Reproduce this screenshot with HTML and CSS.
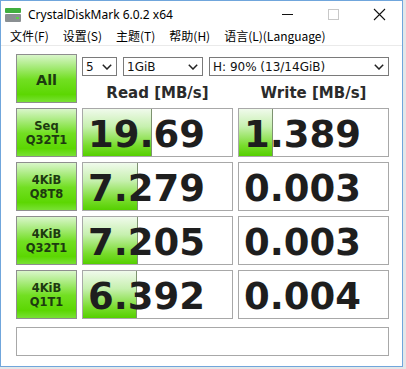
FILE: index.html
```html
<!DOCTYPE html>
<html lang="zh-CN">
  <head>
    <meta charset="UTF-8">
    <meta name="viewport" content="width=device-width, initial-scale=1.0">
    <title>CrystalDiskMark 6.0.2 x64</title>
    <link rel="stylesheet" href="styles.css">
  </head>
  <body>
    <div class="window">
      <div class="titlebar">
        <svg class="app-icon" width="16" height="14" viewBox="0 0 16 14">
          <rect x="0" y="0" width="16" height="5" rx="1" fill="#3fae3f"/>
          <rect x="0" y="6" width="16" height="8" rx="1" fill="#8a8f92"/>
          <rect x="11" y="9" width="3" height="2" fill="#5ad04a"/>
        </svg>
        <span class="title">CrystalDiskMark 6.0.2 x64</span>
        <div class="controls">
          <svg class="ctl" width="46" height="27" viewBox="0 0 46 27">
            <line x1="18" y1="13.5" x2="29" y2="13.5" stroke="#111" stroke-width="1"/>
          </svg>
          <svg class="ctl" width="46" height="27" viewBox="0 0 46 27">
            <rect x="18.5" y="8.5" width="10" height="10" fill="none" stroke="#c8c8c8" stroke-width="1"/>
          </svg>
          <svg class="ctl" width="46" height="27" viewBox="0 0 46 27">
            <path d="M18 8 L29 19 M29 8 L18 19" stroke="#111" stroke-width="1.1"/>
          </svg>
        </div>
      </div>
      <div class="menubar">
        <span class="menu-item">文件(F)</span>
        <span class="menu-item">设置(S)</span>
        <span class="menu-item">主题(T)</span>
        <span class="menu-item">帮助(H)</span>
        <span class="menu-item">语言(L)(Language)</span>
      </div>
      <div class="client">
        <div class="grid">
          <div class="test-btn all">All</div>
          <div class="top-controls">
            <div class="selects">
              <div class="select s-count">
                <span>5</span>
                <svg width="10" height="6" viewBox="0 0 10 6"><polyline points="0.8,0.8 5,5 9.2,0.8" fill="none" stroke="#222" stroke-width="1.5"/></svg>
              </div>
              <div class="select s-size">
                <span>1GiB</span>
                <svg width="10" height="6" viewBox="0 0 10 6"><polyline points="0.8,0.8 5,5 9.2,0.8" fill="none" stroke="#222" stroke-width="1.5"/></svg>
              </div>
              <div class="select s-drive">
                <span>H: 90% (13/14GiB)</span>
                <svg width="10" height="6" viewBox="0 0 10 6"><polyline points="0.8,0.8 5,5 9.2,0.8" fill="none" stroke="#222" stroke-width="1.5"/></svg>
              </div>
            </div>
            <div class="headers">
              <div class="col-head">Read [MB/s]</div>
              <div class="col-head">Write [MB/s]</div>
            </div>
          </div>

          <div class="test-btn">Seq<br>Q32T1</div>
          <div class="cell"><div class="bar" style="width: 46%"></div><span class="value">19.69</span></div>
          <div class="cell"><div class="bar" style="width: 23%"></div><span class="value">1.389</span></div>

          <div class="test-btn">4KiB<br>Q8T8</div>
          <div class="cell"><div class="bar" style="width: 37%"></div><span class="value">7.279</span></div>
          <div class="cell"><span class="value">0.003</span></div>

          <div class="test-btn">4KiB<br>Q32T1</div>
          <div class="cell"><div class="bar" style="width: 37%"></div><span class="value">7.205</span></div>
          <div class="cell"><span class="value">0.003</span></div>

          <div class="test-btn">4KiB<br>Q1T1</div>
          <div class="cell"><div class="bar" style="width: 36.5%"></div><span class="value">6.392</span></div>
          <div class="cell"><span class="value">0.004</span></div>
        </div>
        <div class="comment"></div>
      </div>
    </div>
  </body>
</html>
```

FILE: styles.css
```css
body {
  margin: 0;
  padding: 0;
  background-color: #e4e6e8;
}

.window {
  box-sizing: border-box;
  width: 403px;
  height: 367px;
  border: 1px solid #70a6dc;
  background-color: #fff;
  font-family: "Noto Sans", "Noto Sans CJK SC", sans-serif;
}

.titlebar {
  display: flex;
  align-items: center;
  height: 27px;
}

.app-icon {
  margin-left: 4px;
  margin-top: 1px;
}

.title {
  margin-left: 7px;
  font-size: 12px;
  color: #000;
}

.controls {
  display: flex;
  margin-left: auto;
}

.ctl {
  display: block;
}

.menubar {
  display: flex;
  align-items: center;
  height: 18px;
  padding-left: 9px;
  padding-bottom: 2px;
  box-sizing: border-box;
  gap: 14px;
  border-bottom: 1px solid #eaeaea;
  font-family: "Noto Sans CJK SC", sans-serif;
  font-size: 12px;
  color: #000;
}

.client {
  padding: 8px 0 0 15px;
}

.grid {
  display: grid;
  grid-template-columns: 61px 151px 151px;
  grid-auto-rows: 49px;
  column-gap: 5px;
  row-gap: 5px;
}

.test-btn {
  box-sizing: border-box;
  display: flex;
  align-items: center;
  justify-content: center;
  text-align: center;
  border: 1px solid #8e8e8e;
  background: linear-gradient(#d9f6ca 0%, #a9eb7e 24%, #72df22 52%, #5cd702 84%, #78e134 100%);
  font-family: "DejaVu Sans", sans-serif;
  font-weight: bold;
  font-size: 11.5px;
  line-height: 14px;
  color: #1d3a10;
}

.test-btn.all {
  font-size: 14.5px;
  padding-top: 2px;
}

.top-controls {
  grid-column: 2 / 4;
  display: flex;
  flex-direction: column;
}

.selects {
  display: flex;
  gap: 6px;
  margin-top: 3px;
}

.select {
  box-sizing: border-box;
  display: flex;
  align-items: center;
  justify-content: space-between;
  height: 19px;
  padding: 0 4px 0 3px;
  border: 1px solid #7a7a7a;
  background-color: #fff;
  font-family: "DejaVu Sans", sans-serif;
  font-size: 12px;
  color: #111;
}

.s-count {
  width: 35px;
}

.s-size {
  width: 80px;
}

.s-drive {
  width: 180px;
}

.headers {
  display: grid;
  grid-template-columns: 151px 151px;
  column-gap: 5px;
  margin-top: auto;
}

.col-head {
  text-align: center;
  font-family: "DejaVu Sans", sans-serif;
  font-weight: bold;
  font-size: 15px;
  line-height: 20px;
  color: #2b2b2b;
}

.cell {
  position: relative;
  box-sizing: border-box;
  border: 1px solid #a8a8a8;
  background-color: #fff;
  padding: 5px 0 0 5px;
  overflow: hidden;
}

.bar {
  position: absolute;
  left: 0;
  top: 0;
  bottom: 0;
  box-sizing: border-box;
  border-right: 1px solid #7d9270;
  background: linear-gradient(#f0faec 0%, #c6f0ae 38%, #78dc2c 78%, #55d000 100%);
}

.value {
  position: relative;
  display: block;
  font-family: "DejaVu Sans", sans-serif;
  font-weight: bold;
  font-size: 37px;
  line-height: 42px;
  color: #1e1e1e;
}

.comment {
  box-sizing: border-box;
  width: 373px;
  height: 29px;
  margin-top: 8px;
  border: 1px solid #a8a8a8;
  background-color: #fff;
}
```
